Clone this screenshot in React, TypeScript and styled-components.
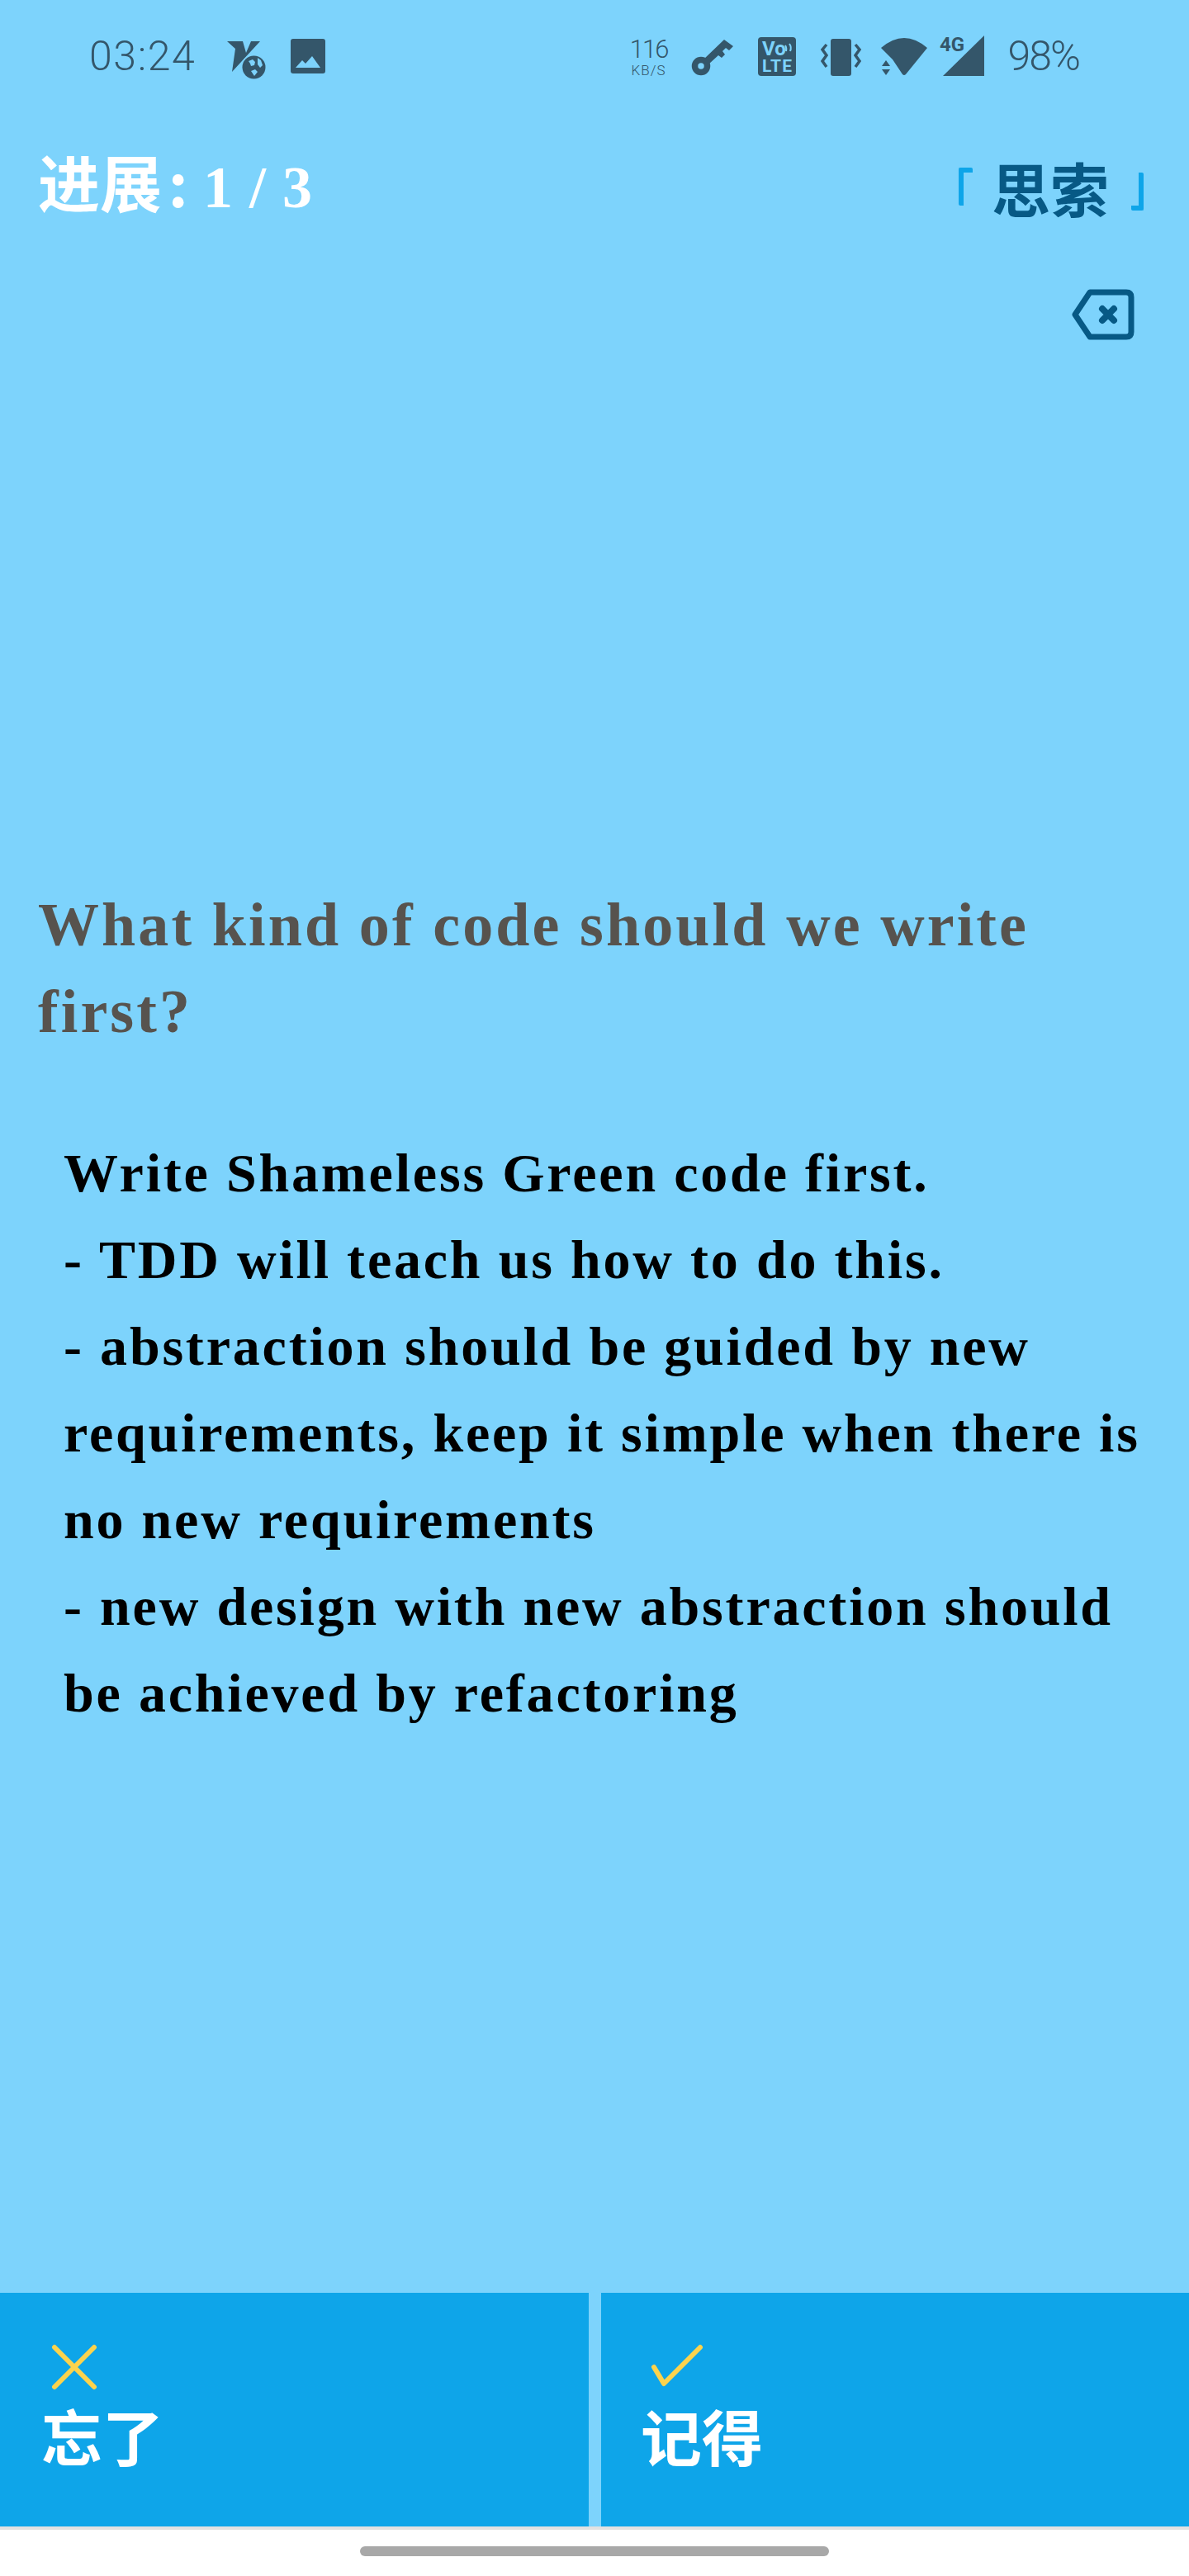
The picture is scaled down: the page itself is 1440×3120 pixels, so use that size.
import styled, { createGlobalStyle } from "styled-components";

const GlobalStyle = createGlobalStyle`
  html, body {
    margin: 0;
    padding: 0;
    background: #ffffff;
  }
  * {
    box-sizing: border-box;
  }
`;

const statusColor = "#34566a";
const skyBg = "#7dd3fc";

const Screen = styled.div`
  width: 1440px;
  height: 3120px;
  display: flex;
  flex-direction: column;
  background: #ffffff;
  font-family: "Liberation Serif", "Noto Sans CJK SC", serif;
  overflow: hidden;
`;

const Main = styled.div`
  height: 2777px;
  background: ${skyBg};
  display: flex;
  flex-direction: column;
`;

const StatusBar = styled.div`
  height: 168px;
  padding: 43px 133px 0 108px;
  display: flex;
  justify-content: space-between;
  color: ${statusColor};
  font-family: Roboto, "Liberation Sans", sans-serif;
  font-weight: 300;
`;

const StatusGroup = styled.div`
  display: flex;
  align-items: flex-start;
`;

const Clock = styled.span`
  font-size: 50px;
  line-height: 50px;
  width: 167px;
  letter-spacing: 1.6px;
`;

const Speed = styled.div`
  width: 74px;
  margin-right: 15px;
  display: flex;
  flex-direction: column;
  align-items: center;
  padding-top: 1px;
`;

const SpeedValue = styled.span`
  font-size: 31px;
  line-height: 32px;
  letter-spacing: -2px;
`;

const SpeedUnit = styled.span`
  font-size: 17px;
  line-height: 18px;
  letter-spacing: 1px;
`;

const Battery = styled.span`
  font-size: 50px;
  line-height: 50px;
  margin-left: 29px;
  letter-spacing: -2px;
`;

const StatusIcon = styled.svg<{ $gap?: number; $top?: number }>`
  display: block;
  flex-shrink: 0;
  overflow: visible;
  margin-right: ${({ $gap }) => $gap ?? 0}px;
  margin-top: ${({ $top }) => $top ?? 0}px;
  fill: ${statusColor};
`;

const Header = styled.div`
  height: 120px;
  padding: 0 55px 0 46px;
  display: flex;
  align-items: center;
  justify-content: space-between;
`;

const Progress = styled.div`
  display: flex;
  align-items: baseline;
  margin-bottom: 10px;
  color: #ffffff;
  font-size: 72px;
  font-weight: 700;
  line-height: 80px;
  word-spacing: 2px;
`;

const ProgressLabel = styled.span`
  font-family: "Noto Sans CJK SC", sans-serif;
  font-size: 75px;
`;

const ProgressColon = styled.span`
  margin: 0 16px 0 6px;
  font-size: 84px;
`;

const Stage = styled.div`
  display: flex;
  align-items: center;
  margin-bottom: 5px;
  color: #075985;
  font-size: 71px;
  font-weight: 700;
  line-height: 80px;
  font-family: "Noto Sans CJK SC", sans-serif;
`;

const Bracket = styled.span<{ $close?: boolean }>`
  width: ${({ $close }) => ($close ? 15 : 17)}px;
  height: 46px;
  margin: ${({ $close }) => ($close ? "12px 0 0 27px" : "0 23px 0 0")};
  border-style: solid;
  border-color: #0ea5e9;
  border-width: ${({ $close }) => ($close ? "0 6px 6px 0" : "6px 0 0 6px")};
  border-radius: 2px;
`;

const Tools = styled.div`
  height: 186px;
  padding: 0 66px 0 0;
  display: flex;
  align-items: center;
  justify-content: flex-end;
`;

const Content = styled.div`
  padding-top: 594px;
  display: flex;
  flex-direction: column;
`;

const Question = styled.div`
  padding: 0 46px;
  font-size: 74px;
  font-weight: 700;
  letter-spacing: 3.1px;
  line-height: 105px;
  color: #57534e;
`;

const Answer = styled.div`
  margin-top: 90px;
  padding: 0 40px 0 77px;
  font-size: 66px;
  font-weight: 700;
  letter-spacing: 2.8px;
  line-height: 105px;
  color: #000000;
`;

const Actions = styled.div`
  height: 283px;
  display: grid;
  grid-template-columns: 713px 712px;
  justify-content: space-between;
  background: ${skyBg};
`;

const ActionButton = styled.div<{ $inset: number }>`
  background: #0ea5e9;
  padding: 62px 0 0 ${({ $inset }) => $inset}px;
  display: flex;
  flex-direction: column;
`;

const ActionIcon = styled.svg<{ $shift: number }>`
  display: block;
  margin-left: ${({ $shift }) => $shift}px;
  fill: none;
  stroke: #fcd34d;
  stroke-width: 6;
  stroke-linecap: round;
  stroke-linejoin: round;
`;

const ActionLabel = styled.span`
  margin-top: 4px;
  color: #ffffff;
  font-family: "Noto Sans CJK SC", sans-serif;
  font-size: 74px;
  font-weight: 700;
  line-height: 100px;
`;

const NavBar = styled.div`
  flex: 1;
  border-top: 4px solid #e2e2e2;
  display: flex;
  justify-content: center;
  padding-top: 20px;
  background: #ffffff;
`;

const HomeHandle = styled.div`
  width: 568px;
  height: 12px;
  border-radius: 6px;
  background: #a8a8a8;
`;

const answerLines = [
  "Write Shameless Green code first.",
  "- TDD will teach us how to do this.",
  "- abstraction should be guided by new requirements, keep it simple when there is no new requirements",
  "- new design with new abstraction should be achieved by refactoring",
];

export default function App() {
  return (
    <>
      <GlobalStyle />
      <Screen>
        <Main>
          <StatusBar>
            <StatusGroup>
              <Clock>03:24</Clock>
              <StatusIcon $gap={30} $top={7} width="47" height="46" viewBox="0 0 47 46">
                <path d="M0 0H19L23 14L29 0H40L6 37L10 9Z" />
                <circle cx="32.5" cy="31.5" r="15.5" fill={skyBg} />
                <circle cx="32.5" cy="31.5" r="14" />
                <path
                  d="M26 24l5-2 3 3-1 4-4 1-1-3zM37 20l4 3 2 6-3 3-3-4zM29 36l5-2 3 3-4 5z"
                  fill={skyBg}
                />
              </StatusIcon>
              <StatusIcon $top={4} width="42" height="42" viewBox="0 0 42 42">
                <rect width="42" height="42" rx="3" />
                <path d="M6 35L14 26L18 30L26 21L36 35Z" fill={skyBg} />
              </StatusIcon>
            </StatusGroup>
            <StatusGroup>
              <Speed>
                <SpeedValue>116</SpeedValue>
                <SpeedUnit>KB/S</SpeedUnit>
              </Speed>
              <StatusIcon $gap={29} $top={5} width="51" height="43" viewBox="0 0 51 43">
                <circle cx="11" cy="32" r="7.5" fill="none" stroke={statusColor} strokeWidth="7.5" />
                <path d="M14 24L39 0L50 8L45 13L41 10L37 14L40 18L36 22L32 19L20 30Z" />
              </StatusIcon>
              <StatusIcon $gap={30} $top={2} width="46" height="47" viewBox="0 0 46 47">
                <rect width="46" height="47" rx="4" />
                <text x="5" y="22" fontSize="24" fontWeight="700" fontFamily="Roboto" fill={skyBg}>
                  Vo
                </text>
                <text x="5" y="42" fontSize="21" fontWeight="700" fontFamily="Roboto" fill={skyBg} textLength="36">
                  LTE
                </text>
                <path d="M33 10q2 3 1 7M38 8q3 4 1 9" fill="none" stroke={skyBg} strokeWidth="2" />
              </StatusIcon>
              <StatusIcon $gap={24} $top={4} width="49" height="45" viewBox="0 0 49 45">
                <rect x="12" y="0" width="25" height="45" rx="3" />
                <path
                  d="M7 7L2 13L7 20L2 27L7 34M42 7L47 13L42 20L47 27L42 34"
                  fill="none"
                  stroke={statusColor}
                  strokeWidth="3.5"
                />
              </StatusIcon>
              <StatusIcon $gap={13} $top={3} width="57" height="45" viewBox="0 0 57 45">
                <path d="M0 12Q28 -12 56 12L30 44Q28 46 26 44L14 26Z" />
                <path d="M1 34L6 27L11 34ZM1 38H11L6 45Z" />
              </StatusIcon>
              <StatusIcon width="55" height="50" viewBox="0 0 55 50">
                <path d="M5 49L55 0V49Z" />
                <text x="1" y="19" fontSize="24" fontWeight="700" fontFamily="Roboto" fill={statusColor}>
                  4G
                </text>
              </StatusIcon>
              <Battery>98%</Battery>
            </StatusGroup>
          </StatusBar>

          <Header>
            <Progress>
              <ProgressLabel>进展</ProgressLabel>
              <ProgressColon>:</ProgressColon>1 / 3
            </Progress>
            <Stage>
              <Bracket />
              思索
              <Bracket $close />
            </Stage>
          </Header>

          <Tools>
            <svg width="76" height="62" viewBox="0 0 76 62" fill="none" stroke="#075985" strokeLinejoin="round" strokeLinecap="round">
              <path d="M22 4H66Q72 4 72 10V52Q72 58 66 58H22L4 31Z" strokeWidth="7" />
              <path d="M37 24L51 38M51 24L37 38" strokeWidth="8" />
            </svg>
          </Tools>

          <Content>
            <Question>What kind of code should we write first?</Question>
            <Answer>
              {answerLines.map((line) => (
                <div key={line}>{line}</div>
              ))}
            </Answer>
          </Content>
        </Main>

        <Actions>
          <ActionButton $inset={50}>
            <ActionIcon $shift={12} width="56" height="56" viewBox="0 0 56 56">
              <path d="M4 4L52 52M52 4L4 52" />
            </ActionIcon>
            <ActionLabel>忘了</ActionLabel>
          </ActionButton>
          <ActionButton $inset={48}>
            <ActionIcon $shift={12} width="64" height="56" viewBox="0 0 64 56">
              <path d="M4 28L16 48L60 4" />
            </ActionIcon>
            <ActionLabel>记得</ActionLabel>
          </ActionButton>
        </Actions>

        <NavBar>
          <HomeHandle />
        </NavBar>
      </Screen>
    </>
  );
}
